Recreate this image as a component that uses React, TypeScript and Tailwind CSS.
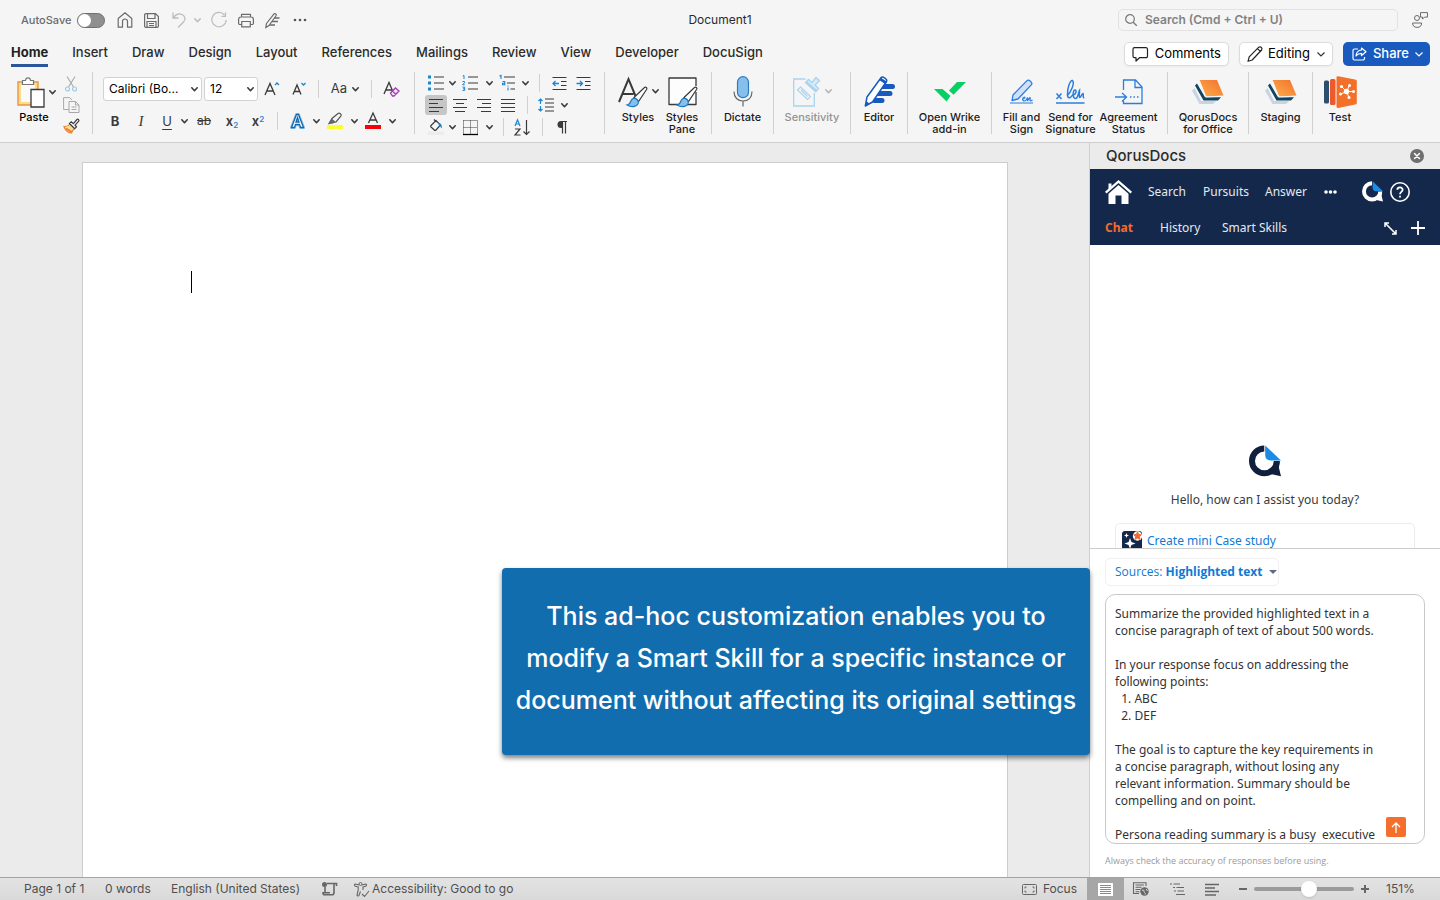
import type { ReactNode } from "react";

const ink = "#3a3a3a";
const blue = "#1a86d0";

function Svg({ w, h, children, className = "" }: { w: number; h: number; children: ReactNode; className?: string }) {
  return (
    <svg width={w} height={h} viewBox={`0 0 ${w} ${h}`} fill="none" className={`shrink-0 overflow-visible ${className}`} aria-hidden="true">
      {children}
    </svg>
  );
}

function Chevron({ color = "#3a3a3a" }: { color?: string }) {
  return (
    <Svg w={7} h={5}>
      <path d="M.8 .8 3.5 3.7 6.2 .8" stroke={color} strokeWidth="1.6" strokeLinecap="round" strokeLinejoin="round" />
    </Svg>
  );
}

/* ---------- small ribbon pieces ---------- */

function Cell({ w, label, children }: { w: string; label: string; children: ReactNode }) {
  return (
    <button type="button" aria-label={label} className={`flex h-5 shrink-0 items-center justify-center ${w}`}>
      {children}
    </button>
  );
}

function Drop({ label }: { label: string }) {
  return (
    <Cell w="w-[10px]" label={label}>
      <Chevron />
    </Cell>
  );
}

function Bar({ w }: { w: string }) {
  return (
    <span className={`flex h-[18px] shrink-0 justify-center ${w}`}>
      <span className="w-px bg-[#d0d0d0]" />
    </span>
  );
}

function Divider() {
  return <span className="h-[62px] w-px shrink-0 bg-[#d0d0d0]" />;
}

function Big({ w, icon, children, muted = false, drop = false }: { w: string; icon: ReactNode; children: ReactNode; muted?: boolean; drop?: boolean }) {
  return (
    <button type="button" className={`flex shrink-0 flex-col items-center ${w} ${muted ? "text-[#929292]" : "text-[#1c1c1c]"}`}>
      <span className="flex h-[39px] items-center justify-center gap-1">
        {icon}
        {drop && <Chevron color={muted ? "#b5b5b5" : "#3a3a3a"} />}
      </span>
      <span className="text-[11px] leading-3 font-medium whitespace-nowrap">{children}</span>
    </button>
  );
}

/* ---------- icons ---------- */

function PasteIcon() {
  return (
    <Svg w={28} h={31}>
      <path d="M1 5h20v23H1z" fill="#fbdc8e" stroke="#ee9440" strokeWidth="1.4" />
      <path d="M4 8h14v17H4z" fill="#fafafa" />
      <path d="M5.500 3.500h3C8.700 1.800 9.600.8 11 .8s2.300 1 2.500 2.700h3v4h-11z" fill="#fff" stroke="#777" strokeWidth="1.200" />
      <path d="M14 12.500h13v17.500H14z" fill="#fff" stroke={ink} strokeWidth="1.300" />
    </Svg>
  );
}

function ScissorsIcon() {
  return (
    <Svg w={12} h={16}>
      <path d="M2 .5 8.500 11M10 .5 3.500 11" stroke="#a8a8a8" strokeWidth="1.100" />
      <circle cx="2.500" cy="13" r="2" stroke="#9ccbea" strokeWidth="1.200" />
      <circle cx="9.500" cy="13" r="2" stroke="#9ccbea" strokeWidth="1.200" />
    </Svg>
  );
}

function CopyIcon() {
  return (
    <Svg w={17} h={16}>
      <path d="M6 12.500H.6V.6h6l2.500 2.500" stroke="#a8a8a8" />
      <path d="M6 4.500h6.500l3.500 3.500v7.500H6zM12.500 4.500V8H16M8.500 10h5M8.500 12.500h5" stroke="#a8a8a8" />
    </Svg>
  );
}

function PainterIcon() {
  return (
    <Svg w={17} h={16}>
      <path d="M1 8.500c3 .2 4.500-.5 6-2.500l4.500 4.500C9.500 12 9 13.500 8.500 15 5 14.500 2 12 1 8.500z" fill="#fbdc8e" stroke="#e8823a" strokeWidth="1.200" />
      <path d="M3 10.500l6 3.500" stroke="#e8823a" strokeWidth="2" />
      <path d="m6.500 5.500 1.800-1.700 2 1.800L14 1.500c1-.9 2.600.6 1.700 1.700L12 7.200l1.500 1.600-1.800 1.800z" fill="#fff" stroke={ink} strokeWidth="1.200" />
    </Svg>
  );
}

function BulletsIcon() {
  return (
    <Svg w={17} h={16}>
      <path d="M0 .5h3v3H0zM0 6.500h3v3H0zM0 12.500h3v3H0z" fill={blue} />
      <path d="M6 2h10M6 8h10M6 14h10" stroke={ink} strokeWidth="1.200" />
    </Svg>
  );
}

function NumbersIcon() {
  return (
    <Svg w={17} h={16}>
      <path d="M.8 1 2 .4V4M.5 6.500h2v1.300l-2 2h2.200M.5 12.200h2.200v3.200H.5M1 13.800h1.500" stroke={blue} />
      <path d="M6 2h10M6 8h10M6 14h10" stroke={ink} strokeWidth="1.200" />
    </Svg>
  );
}

function MultiIcon() {
  return (
    <Svg w={17} h={16}>
      <path d="M.5 1 2 .4V4M3.500 6.500h2.300v3.200H3.500V8.200h2M9 10.500v1M9 12.500v3" stroke={blue} strokeWidth="1.100" />
      <path d="M5 2h11M8 8h8M11.500 14H16" stroke={ink} strokeWidth="1.200" />
    </Svg>
  );
}

function IndentIcon({ inward = false }: { inward?: boolean }) {
  return (
    <Svg w={15} h={15}>
      <path d="M.5 1.500h14M9 5.500h5.500M9 9.500h5.500M.5 13.500h14" stroke={ink} strokeWidth="1.200" />
      <path d={inward ? "M.5 7.500h6M4 5l2.500 2.500L4 10" : "M1 7.500h6M3.500 5 1 7.500 3.500 10"} stroke={blue} strokeWidth="1.300" />
    </Svg>
  );
}

function LinesIcon({ d }: { d: string }) {
  return (
    <Svg w={14} h={13}>
      <path d={d} stroke={ink} strokeWidth="1.200" />
    </Svg>
  );
}

function BrushTip({ x, y }: { x: number; y: number }) {
  return (
    <g transform={`translate(${x} ${y})`}>
      <path d="M7 11 17.500 1c1.300-1 3 .4 2.200 1.800L11.500 15z" fill="#fff" stroke={ink} strokeWidth="1.200" />
      <path d="M0 18.500c2.500-.3 3-1.500 4-4.300 1-2.500 4-3.200 6-1.200s1.700 4.500-.5 6c-2.700 1.700-6.500 1.300-9.500-.5z" fill="#86bfec" stroke="#1e78bd" strokeWidth="1.200" />
    </g>
  );
}

function StylesIcon() {
  return (
    <Svg w={30} h={30}>
      <path d="M1 25 10.500 2l7 17M4.500 17h11" stroke={ink} strokeWidth="2" />
      <BrushTip x={9} y={9.5} />
    </Svg>
  );
}

function PaneIcon() {
  return (
    <Svg w={28} h={30}>
      <path d="M28 15v12.500H1V1h27v8" fill="#fdfdfd" stroke={ink} strokeWidth="1.300" strokeLinejoin="round" />
      <BrushTip x={9} y={9.5} />
    </Svg>
  );
}

function MicIcon() {
  return (
    <Svg w={20} h={31}>
      <rect x="4.500" y=".7" width="11" height="21" rx="5.500" fill="#86bfec" stroke="#2a7cc0" strokeWidth="1.200" />
      <path d="M1 15.500c0 6 3.700 9.500 9 9.500s9-3.500 9-9.500M10 25v5.500" stroke="#666" strokeWidth="1.200" />
    </Svg>
  );
}

function SensitivityIcon() {
  return (
    <Svg w={28} h={30}>
      <path d="M12.500 2H.7v27h20.600V16" stroke="#a9d4ee" strokeWidth="1.300" />
      <path d="m7.500 10 10 9.500-3 3-10-9.500zM8 13l6.500 6.500" stroke="#a9d4ee" strokeWidth="1.200" />
      <path d="m12.500 5.500 3-3 3.500 3 4-5 3.500 3.200-4.500 4.300 3.500 3.500-2.500 3z" fill="#d7ebf7" stroke="#a9d4ee" strokeWidth="1.300" />
      <path d="m13 5 10.500 9.500" stroke="#a9d4ee" strokeWidth="2.600" />
    </Svg>
  );
}

function EditorIcon() {
  return (
    <Svg w={31} h={31}>
      <path d="M18 10.500h10.500M14.500 17.500H26M10.500 24.500H18" stroke="#185abd" strokeWidth="5" strokeLinecap="round" />
      <path d="M3 21 17 1.800c1.500-2 7 1.500 5.500 3.700L8.500 26 1.300 30z" fill="#fff" stroke="#185abd" strokeWidth="1.500" strokeLinejoin="round" />
      <path d="m17 1.800 6 4-1.500 2.500-6-4z" fill="#185abd" />
      <path d="m1.300 30 1-5 3 2.500z" fill="#185abd" />
    </Svg>
  );
}

function WrikeIcon() {
  return (
    <Svg w={32} h={20}>
      <path d="M0 7h8.500l8 7-4 5.500z" fill="#08cf65" />
      <path d="M23 0h9L19.500 12.800 15 8.500z" fill="#08cf65" />
    </Svg>
  );
}

function FillSignIcon() {
  return (
    <Svg w={24} h={25}>
      <path d="M3 16 17 1.600c1.700-1.500 6 1.800 4.500 4L8 20l-6 1.500z" fill="#cfe0f7" stroke="#2b7de0" strokeWidth="1.300" strokeLinejoin="round" />
      <path d="M0 24h23M12 20.500c3-.5 3.500-2.500 2.200-2.500-1.700 0-2.400 4 .3 4 1.500 0 2.500-2.500 3-3.500v3.500c1-2 2.500-4 2.700-3.200.2.800-.7 3 .3 3 .6 0 1.200-.3 2-.8" stroke="#2b7de0" strokeWidth="1.200" />
    </Svg>
  );
}

function SignatureIcon() {
  return (
    <Svg w={29} h={25}>
      <path d="M.5 14.500l5 5.500M5.500 14.500l-5 5.500M0 24h28.500M11 17c4-4 8-13 5.500-15.500-2.500-1-5.500 9-5 14.500.3 4 3 3.500 5 0 3.700 0 4.500-5 2.500-5s-3 8.500.5 8.500c2.500 0 3-6.500 4-8 0 3-.7 6.500.3 7 1 0 2-4 3.200-4 1 .5-.8 4.500 1.300 4.200" stroke="#2b7de0" strokeWidth="1.500" />
    </Svg>
  );
}

function AgreementIcon() {
  return (
    <Svg w={28} h={26}>
      <path d="M8.500 11V1h12l6.500 7v16.500H8.500V22M20 1v7.500h7M0 18h11M7 14l4.500 4L7 22.500" stroke="#2b7de0" strokeWidth="1.300" />
      <path d="M15 18h8.500" stroke="#2b7de0" strokeWidth="1.500" strokeDasharray="1.500 2" />
    </Svg>
  );
}

function BooksIcon({ id }: { id: string }) {
  return (
    <Svg w={32} h={24}>
      <defs>
        <linearGradient id={id} x1="0" y1="1" x2="1" y2="0">
          <stop offset="0" stopColor="#ffb04a" />
          <stop offset="1" stopColor="#f0702f" />
        </linearGradient>
      </defs>
      <path d="M2.500 8 0 10.500 7.500 24H21l3-3H9z" fill="#c8d4e2" />
      <path d="M5 3.500 3 5.500l8.500 15H26l3-3.300H13z" fill="#0f4463" />
      <path d="M7.500 0H25l6.500 15.500L14 16.500z" fill={`url(#${id})`} />
      <path d="M7.300 .5 13.800 17l14.500-.6" stroke="#f5f5f5" />
    </Svg>
  );
}

function TestIcon() {
  return (
    <Svg w={33} h={32}>
      <rect x="0" y="4.500" width="5" height="23" rx="1.500" fill="#2b4f6e" />
      <rect x="6" y="3" width="5.500" height="26" rx="1.500" fill="#ee5a2c" />
      <path d="M12.500 1.500c0-1 .6-1.500 1.600-1.300l17 3.300c1 .2 1.700.8 1.700 1.800v21.500c0 1-.7 1.600-1.700 1.800l-17 3.300c-1 .2-1.600-.3-1.600-1.300z" fill="#f3702b" />
      <path d="M22.500 15.500 18 11M22.500 15.500l3-6M22.500 15.500h7M22.500 15.500l2.500 6M22.500 15.500 17 18" stroke="#fff" />
      <g fill="#fff">
        <circle cx="22.500" cy="15.500" r="2.700" />
        <circle cx="17.500" cy="10.500" r="1.600" />
        <circle cx="25.500" cy="9.500" r="1.500" />
        <circle cx="29.500" cy="15.500" r="1.500" />
        <circle cx="25" cy="21.500" r="1.500" />
        <circle cx="16.500" cy="18" r="1.500" />
      </g>
    </Svg>
  );
}

function QLogo({ size, color }: { size: number; color: string }) {
  return (
    <svg width={size} height={size} viewBox="0 0 31 30" fill="none" aria-hidden="true" className="shrink-0">
      <path d="M14.800 2.900A12 12 0 1 0 26.900 15" stroke={color} strokeWidth="5.800" />
      <path d="M29.800 15 29 21.500l2 8.200-10-2L25 19z" fill={color} />
      <path d="M15.700 0 31 14.500H21c-3.500 0-5.300-2-5.300-5.500z" fill="#1b8be4" />
    </svg>
  );
}

/* ---------- title bar ---------- */

function TitleBar() {
  const g = "#6b6b6b";
  const l = "#bdbdbd";
  return (
    <header className="grid h-10 grid-cols-[1fr_auto_1fr] items-center">
      <div className="flex items-center pl-[21px]">
        <label className="flex items-center gap-[6px] text-[11px] font-medium text-[#6b6b6b]">
          AutoSave
          <input type="checkbox" role="switch" className="peer sr-only" />
          <span className="flex h-[15px] w-7 items-center rounded-full border border-[#6f6f6f] bg-[#8f8f8f]">
            <span className="size-[13px] rounded-full bg-white" />
          </span>
        </label>
        <div className="flex items-center pl-3">
          <button type="button" aria-label="Home" className="w-4">
            <Svg w={16} h={16}><path d="M1.200 6.500 8 .8l6.800 5.700v8.700h-4.300V9.500a2.500 2.500 0 0 0-5 0v5.700H1.200z" stroke={g} strokeWidth="1.200" strokeLinejoin="round" /></Svg>
          </button>
          <button type="button" aria-label="Save" className="ml-[11px] w-4">
            <Svg w={15} h={15}><path d="M.6 2a1.400 1.400 0 0 1 1.400-1.400h9.500l2.900 2.900V13a1.400 1.400 0 0 1-1.400 1.400H2A1.400 1.400 0 0 1 .6 13zM3.500.6v4.900h7.500V.6M3 14.400V8.500h9v5.900M5 10.500h5M5 12.500h5" stroke={g} strokeWidth="1.200" /></Svg>
          </button>
          <button type="button" aria-label="Undo" className="ml-3 w-4">
            <Svg w={14} h={16}><path d="M1 .5V6h5.500M1.300 5.700C4 2 7.500 1 10.500 2.800c3 2 3.200 5 1 7.200L6 15.500" stroke={l} strokeWidth="1.300" /></Svg>
          </button>
          <button type="button" aria-label="Undo options" className="ml-[6px] w-3"><Chevron color="#bdbdbd" /></button>
          <button type="button" aria-label="Redo" className="ml-[5px] w-[18px]">
            <Svg w={16} h={16}><path d="M13.500 3A7.200 7.200 0 1 0 15.200 8M14.500.3v4h-4" stroke={l} strokeWidth="1.200" /></Svg>
          </button>
          <button type="button" aria-label="Print" className="ml-[9px] w-4">
            <Svg w={16} h={15}><path d="M3.500 4V1.300h9V4M3.500 11.500H1.800A1.200 1.200 0 0 1 .6 10.300V6.500C.6 5 1.500 4 3 4h10c1.500 0 2.400 1 2.400 2.500v3.800a1.200 1.200 0 0 1-1.200 1.200h-1.700M3.700 8.500h8.600v5.300H3.700z" stroke={g} strokeWidth="1.200" strokeLinejoin="round" /></Svg>
          </button>
          <button type="button" aria-label="Editor" className="ml-[11px] w-4">
            <Svg w={15} h={15}><path d="M8 5h6.500M6.500 8.500H13M4.500 12H10" stroke={g} strokeWidth="1.600" /><path d="M1.500 10.500 9 .8c1-.8 2.800.6 2.200 1.700L4 12.500.8 14.500z" fill="#f5f5f5" stroke={g} strokeWidth="1.200" /></Svg>
          </button>
          <button type="button" aria-label="More" className="ml-3 w-4">
            <Svg w={14} h={4}><g fill="#555"><circle cx="2" cy="2" r="1.300" /><circle cx="7" cy="2" r="1.300" /><circle cx="12" cy="2" r="1.300" /></g></Svg>
          </button>
        </div>
      </div>
      <h1 className="text-[12px] text-[#2b2b2b]">Document1</h1>
      <div className="flex items-center justify-end gap-[14px] pr-3">
        <label className="flex h-[22px] w-[280px] items-center gap-2 rounded-[5px] border border-[#e2e2e2] px-[6px]">
          <Svg w={12} h={12}><circle cx="5" cy="5" r="4.300" stroke="#777" strokeWidth="1.200" /><path d="m8.200 8.200 3.600 3.600" stroke="#777" strokeWidth="1.300" /></Svg>
          <input type="text" aria-label="Search" placeholder="Search (Cmd + Ctrl + U)" className="min-w-0 flex-1 bg-transparent text-[12px] font-semibold outline-none placeholder:text-[#828282]" />
        </label>
        <button type="button" aria-label="Presence">
          <Svg w={16} h={16}><circle cx="5" cy="6" r="2.500" stroke={g} /><path d="M.6 11h9c0 3-1.700 4.400-4.500 4.400S.6 14 .6 11zM8.500.6h7v4.500h-3l-2 2v-2h-2z" stroke={g} /></Svg>
        </button>
      </div>
    </header>
  );
}

/* ---------- tab row ---------- */

const tabs = ["Insert", "Draw", "Design", "Layout", "References", "Mailings", "Review", "View", "Developer", "DocuSign"];

function TabRow() {
  const pill = "flex h-6 items-center rounded-[5px] text-[13px]";
  return (
    <div className="flex justify-between pr-[10px] pl-[11px]">
      <nav className="flex gap-6 text-[13px] leading-6 font-medium text-[#2b2b2b]">
        <a href="#home" className="border-b-3 border-[#2b579a] font-bold text-[#1f1f1f]">Home</a>
        {tabs.map((t) => (
          <a key={t} href={`#${t.toLowerCase()}`}>{t}</a>
        ))}
      </nav>
      <div className="flex gap-[10px] pt-[2px] pb-px">
        <button type="button" className={`${pill} gap-[6px] border border-[#dcdcdc] bg-white px-[7px] text-black shadow-xs`}>
          <Svg w={17} h={15}><path d="M2.500.7h11.500a1.500 1.500 0 0 1 1.500 1.500v7a1.500 1.500 0 0 1-1.500 1.500H7.500L4 14v-3.300H2.500A1.500 1.500 0 0 1 1 9.200v-7A1.500 1.500 0 0 1 2.500.7z" stroke="#222" strokeWidth="1.200" strokeLinejoin="round" /></Svg>
          Comments
        </button>
        <button type="button" className={`${pill} gap-[5px] border border-[#dcdcdc] bg-white px-[7px] text-black shadow-xs`}>
          <Svg w={16} h={16}><path d="m1 15.300 1.200-4.500L11.800 1.200c1.800-1.300 4 1 2.800 2.800L5.200 14zM10.500 2.600l3 3" stroke="#222" strokeWidth="1.200" strokeLinejoin="round" /></Svg>
          Editing
          <Svg w={8} h={5} className="ml-[2px]"><path d="m.5.5 3.500 3.500L7.500.5" stroke="#333" strokeWidth="1.200" /></Svg>
        </button>
        <button type="button" className={`${pill} gap-[6px] bg-[#185abd] px-[7px] pl-[9px] font-medium text-white`}>
          <Svg w={15} h={14}><path d="M6 2H2.500A1.500 1.500 0 0 0 1 3.500v8A1.500 1.500 0 0 0 2.500 13h8.500a1.500 1.500 0 0 0 1.500-1.500V10M9.500 1l4.500 3.700-4.500 3.800V6.300C7 6.300 5.500 7 4 9c.3-3.500 2.200-5.700 5.500-6z" stroke="#fff" strokeWidth="1.200" strokeLinejoin="round" /></Svg>
          Share
          <Svg w={8} h={5}><path d="m.5.5 3.500 3.500L7.500.5" stroke="#fff" strokeWidth="1.200" /></Svg>
        </button>
      </div>
    </div>
  );
}

/* ---------- ribbon ---------- */

function Picker({ w, label, value }: { w: string; label: string; value: string }) {
  return (
    <span className={`relative flex h-6 shrink-0 items-center ${w}`}>
      <select aria-label={label} className="h-full w-full appearance-none rounded-[3px] border border-[#d2d2d2] bg-white pl-[5px] text-[12px] text-black">
        <option>{value}</option>
      </select>
      <span className="pointer-events-none absolute right-1">
        <Chevron />
      </span>
    </span>
  );
}

function Ribbon() {
  return (
    <div className="flex items-start overflow-hidden border-b border-[#cfcfcf] pt-[5px] pb-[5px]">
      <div className="flex w-[92px] shrink-0">
        <button type="button" className="flex w-[58px] flex-col items-center gap-[3px] pt-[5px] pl-[10px] text-[11px] leading-3 font-medium">
          <span className="flex items-center gap-1 pl-1"><PasteIcon /><Chevron /></span>
          Paste
        </button>
        <div className="flex w-[26px] flex-col items-center gap-[5px] pt-1">
          <button type="button" aria-label="Cut"><ScissorsIcon /></button>
          <button type="button" aria-label="Copy"><CopyIcon /></button>
          <button type="button" aria-label="Format painter"><PainterIcon /></button>
        </div>
      </div>
      <Divider />

      <div className="flex w-[321px] shrink-0 flex-col gap-[10px] pt-[5px] pl-[10px]">
        <div className="flex items-center">
          <Picker w="w-[99px]" label="Font" value="Calibri (Bo..." />
          <span className="w-[2px]" />
          <Picker w="w-[54px]" label="Font size" value="12" />
          <Cell w="w-7" label="Grow font">
            <Svg w={16} h={15}><path d="M1 13 6 1.500 11 13M2.800 9h6.500" stroke={ink} strokeWidth="1.300" /><path d="m11 3 2-2 2 2" stroke={blue} strokeWidth="1.300" /></Svg>
          </Cell>
          <Cell w="w-[26px]" label="Shrink font">
            <Svg w={14} h={14}><path d="m1 12.500 4-9.500 4 9.500M2.500 9.500h5" stroke={ink} strokeWidth="1.300" /><path d="m9.500 1 2 2 2-2" stroke={blue} strokeWidth="1.300" /></Svg>
          </Cell>
          <Bar w="w-3" />
          <button type="button" className="flex w-[42px] items-center justify-center gap-[5px] text-[13px] text-[#3a3a3a]">Aa <Chevron /></button>
          <Bar w="w-[10px]" />
          <Cell w="w-[30px]" label="Clear formatting">
            <Svg w={17} h={16}><path d="M1 13 6 1.500l4.500 10.500M3 9h6" stroke={ink} strokeWidth="1.300" /><path d="m7.500 12 5-5 3.500 3-5 5h-1.500zM9.500 10l3.500 3.500" fill="#f3e3f6" stroke="#a03fb0" strokeWidth="1.300" /></Svg>
          </Cell>
        </div>
        <div className="flex items-center text-[13px] leading-5 text-[#3a3a3a]">
          <Cell w="w-6" label="Bold"><b>B</b></Cell>
          <Cell w="w-7" label="Italic"><i className="font-['Liberation_Serif',serif] text-[15px]">I</i></Cell>
          <Cell w="w-6" label="Underline"><span className="underline underline-offset-3">U</span></Cell>
          <Drop label="Underline options" />
          <Cell w="w-[30px]" label="Strikethrough"><s className="text-[12px]">ab</s></Cell>
          <Cell w="w-[26px]" label="Subscript"><span className="font-semibold">x<sub className="text-[8px] text-[#1a86d0]">2</sub></span></Cell>
          <Cell w="w-[26px]" label="Superscript"><span className="font-semibold">x<sup className="text-[8px] text-[#1a86d0]">2</sup></span></Cell>
          <Bar w="w-3" />
          <Cell w="w-7" label="Text effects">
            <Svg w={15} h={16}><path d="m1.500 14.500 5-13h2l5 13h-3l-1-3h-4l-1 3zM6 9h3L7.500 4.500z" fill="#fff" stroke="#8cc4ee" strokeWidth="3" strokeLinejoin="round" /><path d="m1.500 14.500 5-13h2l5 13h-3l-1-3h-4l-1 3zM6 9h3L7.500 4.500z" fill="#fff" stroke="#1468ad" strokeWidth="1.300" /></Svg>
          </Cell>
          <Drop label="Text effect options" />
          <Cell w="w-7" label="Highlight">
            <Svg w={16} h={16}><path d="M0 12h16v4H0z" fill="#fdfd2e" /><path d="m2 10.500 3-5 6-5c1.500-1 4 1 3 2.500L9 9l-3.500.5z" fill="#f5f5f5" stroke="#555" strokeWidth="1.200" /><path d="M1.500 11 5 5.800 8.800 9 6 10.500z" fill="#666" /></Svg>
          </Cell>
          <Drop label="Highlight options" />
          <Cell w="w-7" label="Font colour">
            <Svg w={16} h={16}><path d="M0 12h16v4H0z" fill="#fb0007" /><path d="M3.500 10 8 0l4.500 10M5 7h6" stroke={ink} strokeWidth="1.300" /></Svg>
          </Cell>
          <Drop label="Font colour options" />
        </div>
      </div>
      <Divider />

      <div className="flex w-[189px] shrink-0 flex-col gap-[2px] pt-px pl-[10px]">
        <div className="flex items-center">
          <Cell w="w-[22px]" label="Bullets"><BulletsIcon /></Cell>
          <Drop label="Bullet options" />
          <Cell w="w-[27px]" label="Numbering"><NumbersIcon /></Cell>
          <Drop label="Numbering options" />
          <Cell w="w-[26px]" label="Multilevel list"><MultiIcon /></Cell>
          <Drop label="Multilevel options" />
          <Bar w="w-[18px]" />
          <Cell w="w-[22px]" label="Decrease indent"><IndentIcon /></Cell>
          <Cell w="w-[26px]" label="Increase indent"><IndentIcon inward /></Cell>
        </div>
        <div className="flex items-center">
          <Cell w="w-[22px] rounded-[3px] bg-[#c6c6c6]" label="Align left"><LinesIcon d="M0 .5h14M0 4.500h9M0 8.500h14M0 12.500h10" /></Cell>
          <Cell w="w-[26px]" label="Centre"><LinesIcon d="M0 .5h14M3 4.500h8M0 8.500h14M2 12.500h10" /></Cell>
          <Cell w="w-[22px]" label="Align right"><LinesIcon d="M0 .5h14M5 4.500h9M0 8.500h14M4 12.500h10" /></Cell>
          <Cell w="w-[26px]" label="Justify"><LinesIcon d="M0 .5h14M0 4.500h14M0 8.500h14M0 12.500h14" /></Cell>
          <Bar w="w-3" />
          <Cell w="w-[26px]" label="Line spacing">
            <Svg w={16} h={14}><path d="M2.500 1v5M2.500 8v5M.5 3l2-2 2 2M.5 11l2 2 2-2" stroke={blue} strokeWidth="1.200" /><path d="M7 1h9M7 5h9M7 9h9M7 13h9" stroke={ink} strokeWidth="1.100" /></Svg>
          </Cell>
          <Drop label="Line spacing options" />
        </div>
        <div className="flex items-center">
          <Cell w="w-[22px]" label="Shading">
            <Svg w={16} h={16}><path d="M0 12.500h16v3.500H0z" fill="#ececec" /><path d="m3 6.500 5-5 4.500 4.500-4.500 5c-.5.500-1.200.5-1.700 0L3 8c-.5-.5-.5-1 0-1.500zM6 .5 8.500 3" stroke={ink} strokeWidth="1.200" /><path d="M10 4c2-.5 4 1 4 5.500-1.500-1.500-2-2-3-3" fill={blue} /></Svg>
          </Cell>
          <Drop label="Shading options" />
          <Cell w="w-[27px]" label="Borders">
            <Svg w={15} h={15}><path d="M.5.5v13M14.500.5v13M7.500.5v13M.5.5h14M.5 7.500h14" stroke={ink} strokeDasharray="1 1" /><path d="M0 14.500h15" stroke="#000" strokeWidth="1.300" /></Svg>
          </Cell>
          <Drop label="Border options" />
          <Bar w="w-[18px]" />
          <Cell w="w-[21px]" label="Sort">
            <Svg w={17} h={17}><path d="M1 7 3.500.8 6 7M2 5h3" stroke={blue} strokeWidth="1.200" /><path d="M1 10h5l-5 6h5.500M12.500 1v15M9.500 12.500l3 3 3-3" stroke={ink} strokeWidth="1.200" /></Svg>
          </Cell>
          <Bar w="w-[18px]" />
          <Cell w="w-[22px]" label="Show paragraph marks">
            <Svg w={10} h={13}><path d="M5 .5h5M5.500.5V12.500M8.500.5v12" stroke={ink} strokeWidth="1.200" /><path d="M5.500 0H4a3.500 3.500 0 0 0 0 7h1.500z" fill={ink} /></Svg>
          </Cell>
        </div>
      </div>
      <Divider />

      <div className="flex shrink-0 pl-[10px]">
        <Big w="w-[46px]" icon={<StylesIcon />} drop>Styles</Big>
        <Big w="w-[42px]" icon={<PaneIcon />}>Styles<br />Pane</Big>
        <span className="w-2" />
      </div>
      <Divider />
      <Big w="w-[61px]" icon={<MicIcon />}>Dictate</Big>
      <Divider />
      <Big w="w-[76px]" icon={<SensitivityIcon />} muted drop>Sensitivity</Big>
      <Divider />
      <Big w="w-[56px]" icon={<EditorIcon />}>Editor</Big>
      <Divider />
      <Big w="w-[83px]" icon={<WrikeIcon />}>Open Wrike<br />add-in</Big>
      <Divider />
      <div className="flex w-[175px] shrink-0 justify-center">
        <Big w="w-[46px]" icon={<FillSignIcon />}>Fill and<br />Sign</Big>
        <Big w="w-[52px]" icon={<SignatureIcon />}>Send for<br />Signature</Big>
        <Big w="w-[64px]" icon={<AgreementIcon />}>Agreement<br />Status</Big>
      </div>
      <Divider />
      <Big w="w-[80px]" icon={<BooksIcon id="books-office" />}>QorusDocs<br />for Office</Big>
      <Divider />
      <Big w="w-[63px]" icon={<BooksIcon id="books-staging" />}>Staging</Big>
      <Divider />
      <Big w="w-[54px]" icon={<TestIcon />}>Test</Big>
    </div>
  );
}

/* ---------- task pane ---------- */

const prompt = `Summarize the provided highlighted text in a concise paragraph of text of about 500 words.

In your response focus on addressing the following points:
  1. ABC
  2. DEF

The goal is to capture the key requirements in a concise paragraph, without losing any relevant information. Summary should be compelling and on point.

Persona reading summary is a busy  executive`;

function TaskPane() {
  return (
    <aside className="flex w-[351px] shrink-0 flex-col border-l border-[#cfcfcf] bg-white font-['Noto_Sans',sans-serif]">
      <div className="flex h-[26px] shrink-0 items-center justify-between bg-[#ebebeb] pr-4 pl-4 font-['Inter',sans-serif]">
        <h2 className="text-[15px] font-medium text-[#2b2b2b]">QorusDocs</h2>
        <button type="button" aria-label="Close pane">
          <Svg w={14} h={14}><circle cx="7" cy="7" r="7" fill="#6e6e6e" /><path d="m4.500 4.500 5 5M9.500 4.500l-5 5" stroke="#fff" strokeWidth="1.500" strokeLinecap="round" /></Svg>
        </button>
      </div>
      <div className="shrink-0 bg-[#14284b] text-[12px] text-[#e6e9ef]">
        <nav className="flex h-[45px] items-center pl-[15px]">
          <a href="#pane-home" aria-label="Home">
            <Svg w={27} h={24}><path d="M3.500 3.500h3v3l-3 3z" fill="#fff" /><path d="M13.500 0 27 11.800l-1.500 1.700L13.500 3 1.500 13.500 0 11.800z" fill="#fff" /><path d="m13.500 5 10 8.700V24h-7v-8.500h-6V24h-7V13.700z" fill="#fff" /></Svg>
          </a>
          <a href="#search" className="ml-4">Search</a>
          <a href="#pursuits" className="ml-[17px]">Pursuits</a>
          <a href="#answer" className="ml-4">Answer</a>
          <button type="button" aria-label="More" className="ml-[17px]">
            <Svg w={13} h={4}><g fill="#fff"><circle cx="2" cy="2" r="1.800" /><circle cx="6.500" cy="2" r="1.800" /><circle cx="11" cy="2" r="1.800" /></g></Svg>
          </button>
          <span className="ml-auto flex items-center gap-[7px] pr-[30px]">
            <QLogo size={21} color="#fff" />
            <button type="button" aria-label="Help">
              <Svg w={20} h={20}><circle cx="10" cy="10" r="9.200" stroke="#fff" strokeWidth="1.600" /><path d="M7.300 7.800c.2-3.300 5.500-3 5.300.1C12.500 10 10 9.800 10 12.200M10 13.700v1.800" stroke="#fff" strokeWidth="1.800" /></Svg>
            </button>
          </span>
        </nav>
        <nav className="flex h-[31px] items-center pb-[3px] pl-[15px]">
          <a href="#chat" className="w-[55px] font-bold text-[#f26a2e]">Chat</a>
          <a href="#history" className="w-[62px]">History</a>
          <a href="#smart-skills">Smart Skills</a>
          <span className="ml-auto flex items-center gap-[14px] pr-[15px]">
            <button type="button" aria-label="Expand">
              <Svg w={13} h={13}><path d="m1 1 11 11M1 5V1h4M12 8v4H8" stroke="#fff" strokeWidth="1.500" /></Svg>
            </button>
            <button type="button" aria-label="New chat">
              <Svg w={14} h={14}><path d="M7 0v14M0 7h14" stroke="#fff" strokeWidth="1.800" /></Svg>
            </button>
          </span>
        </nav>
      </div>

      <div className="flex min-h-0 flex-1 flex-col items-center overflow-hidden border-b border-[#cccccc] pt-[200px]">
        <QLogo size={32} color="#0f1f3d" />
        <p className="mt-[14px] text-[12px] leading-[18px] text-[#3a3a3a]">Hello, how can I assist you today?</p>
        <a href="#mini-case-study" className="mt-[14px] flex h-10 w-[300px] shrink-0 items-start gap-[5px] rounded-[5px] border border-[#ececec] px-[6px] pt-[7px] text-[12px] leading-[20px] text-[#0f7ad4]">
          <Svg w={20} h={20}>
            <rect width="20" height="20" rx="3" fill="#14284b" />
            <path d="m8 7 1.400 4.100L13.500 12.500l-4.100 1.400L8 18l-1.400-4.100L2.500 12.500l4.100-1.400z" fill="#fff" />
            <path d="m4.500 2 .7 1.800 1.800.7-1.800.7L4.500 7l-.7-1.800L2 4.500l1.800-.7z" fill="#fff" />
            <circle cx="15.500" cy="5" r="4.700" fill="#fff" />
            <path d="m15.500 1 1.200 2.400 2.600.4-1.900 1.900.5 2.600-2.400-1.200-2.400 1.200.5-2.600-1.900-1.900 2.600-.4z" fill="#f26a2e" stroke="#f26a2e" />
          </Svg>
          Create mini Case study
        </a>
      </div>

      <div className="flex shrink-0 flex-col pt-[9px] pr-[15px] pl-[15px]">
        <button type="button" className="flex h-7 w-[174px] items-center rounded-[5px] border border-[#f0f0f0] pl-[9px] text-[12px] whitespace-nowrap text-[#0f7ad4]">
          <span className="font-['Open_Sans',sans-serif]">Sources: <span className="font-bold">Highlighted text</span></span>
          <Svg w={8} h={4} className="ml-[6px]"><path d="M0 0h8L4 4z" fill="#5f6b85" /></Svg>
        </button>
        <div className="relative mt-2 flex">
          <textarea aria-label="Prompt" defaultValue={prompt} className="h-[250px] w-full resize-none overflow-hidden rounded-[10px] border border-[#c9c9c9] bg-white pt-[10px] pr-12 pb-0 pl-[9px] text-[12px] leading-[17px] text-[#333333]" />
          <button type="button" aria-label="Send" className="absolute right-[19px] bottom-[7px] flex size-5 items-center justify-center rounded-[2px] bg-[#f36f2b]">
            <Svg w={10} h={11}><path d="M5 11V1M1 5l4-4 4 4" stroke="#fff" strokeWidth="1.300" /></Svg>
          </button>
        </div>
        <p className="py-2 font-['Open_Sans',sans-serif] text-[9px] leading-[17px] text-[#9a9a9a]">Always check the accuracy of responses before using.</p>
      </div>
    </aside>
  );
}

/* ---------- status bar ---------- */

function StatusBar() {
  const g = "#666";
  return (
    <footer className="flex h-[23px] shrink-0 items-stretch justify-between border-t border-[#a3a3a3] bg-linear-to-b from-[#e3e3e3] to-[#d9d9d9] text-[12px] text-[#4f4f4f]">
      <div className="flex items-center pl-6">
        <span className="w-[81px]">Page 1 of 1</span>
        <span className="w-[66px]">0 words</span>
        <span className="w-[151px]">English (United States)</span>
        <Svg w={15} h={14}><circle cx="2.500" cy="2.500" r="2.500" fill={g} /><path d="M5 1.500h9.500V4M12 1.500v9c0 1.500-.8 2.300-2 2.300H2.500c-1.200 0-1.500-1.300-1.500-2h7M3 5v6" stroke={g} strokeWidth="1.600" /></Svg>
        <button type="button" className="ml-[17px] flex items-center gap-[2px]">
          <Svg w={16} h={15}><circle cx="6.500" cy="2" r="1.500" stroke={g} /><path d="M5 3 1.500 2C0 2 .3 4 1.500 4.300L4.200 5v3L3 13c0 1 1.500 1.300 2 .3L6.500 9.500M8 3l3.500-1c1.500 0 1.200 2 0 2.300L9 5v3M8 12l2.500 2.500L15 9" stroke={g} strokeWidth="1.100" /></Svg>
          Accessibility: Good to go
        </button>
      </div>
      <div className="flex items-center">
        <button type="button" className="flex items-center gap-[6px]">
          <Svg w={15} h={11}><rect x=".5" y=".5" width="14" height="10" rx="1" stroke={g} /><path d="M3 4.500V3h1.500M10.500 3H12v1.500M3 6.500V8h1.500M10.500 8H12V6.500" stroke={g} /></Svg>
          Focus
        </button>
        <button type="button" aria-label="Print layout" className="ml-[10px] flex h-full w-[37px] items-center justify-center bg-[#a6a6a6]">
          <Svg w={15} h={13}><path d="M0 0h15v13H0z" fill="#fff" /><path d="M2 2.500h11M2 4.500h11M2 6.500h11M2 8.500h11M2 10.500h11" stroke="#8a8a8a" /></Svg>
        </button>
        <button type="button" aria-label="Web layout" className="ml-[9px] w-4">
          <Svg w={16} h={14}><path d="M.5 11V.7H13V4M2.500 3h8.500M2.500 5.300h6M2.500 7.500h5M2.500 9.800h4M0 11.500h6" stroke={g} strokeWidth="1.100" /><circle cx="11.500" cy="9.500" r="4.200" fill={g} /><path d="M9 8.500c1.500-1.500 2 0 2 1s2 1 1 3M13 7l1.500 2" stroke="#ddd" /></Svg>
        </button>
        <button type="button" aria-label="Outline" className="ml-[21px] w-4">
          <Svg w={15} h={12}><path d="M0 1h2M3.500 1H10M3 4.500h2M6.500 4.500H14M4 8h2M7.500 8H14M6 11.500h9" stroke={g} strokeWidth="1.200" /></Svg>
        </button>
        <button type="button" aria-label="Draft" className="ml-[19px] w-4">
          <Svg w={14} h={11}><path d="M0 .5h14M0 4h10M0 7.500h14M0 11h11" stroke={g} strokeWidth="1.300" /></Svg>
        </button>
        <button type="button" aria-label="Zoom out" className="ml-[18px]"><Svg w={8} h={2}><path d="M0 1h8" stroke="#666" strokeWidth="2" /></Svg></button>
        <input
          type="range"
          aria-label="Zoom"
          min={0}
          max={100}
          defaultValue={56}
          className="mx-[7px] h-4 w-[100px] appearance-none bg-transparent [&::-webkit-slider-runnable-track]:h-1 [&::-webkit-slider-runnable-track]:rounded-full [&::-webkit-slider-runnable-track]:bg-[#9b9b9b] [&::-webkit-slider-thumb]:-mt-[6px] [&::-webkit-slider-thumb]:size-4 [&::-webkit-slider-thumb]:appearance-none [&::-webkit-slider-thumb]:rounded-full [&::-webkit-slider-thumb]:bg-white [&::-webkit-slider-thumb]:shadow"
        />
        <button type="button" aria-label="Zoom in"><Svg w={8} h={8}><path d="M0 4h8M4 0v8" stroke="#666" strokeWidth="2" /></Svg></button>
        <span className="ml-[17px] w-[54px]">151%</span>
      </div>
    </footer>
  );
}

export default function App() {
  return (
    <div className="flex h-screen flex-col overflow-hidden bg-[#f5f5f5] font-['Inter',sans-serif]">
      <TitleBar />
      <TabRow />
      <Ribbon />
      <div className="relative flex min-h-0 flex-1">
        <main className="flex min-w-0 flex-1 flex-col bg-[#ebebeb] pt-[19px] pr-[81px] pl-[82px]">
          <div className="flex-1 border border-b-0 border-[#cdcdcd] bg-white pt-[108px] pl-[108px]">
            <span className="block h-[22px] w-px bg-black" />
          </div>
        </main>
        <TaskPane />
        <div className="absolute right-[350px] bottom-[122px] w-[588px] rounded bg-[#126dae] pt-[27px] pb-[34px] text-center text-[25px] leading-[42px] font-medium text-white shadow-[0_3px_5px_rgba(0,0,0,0.5)]">
          This ad-hoc customization enables you to
          <br />
          modify a Smart Skill for a specific instance or
          <br />
          document without affecting its original settings
        </div>
      </div>
      <StatusBar />
    </div>
  );
}
